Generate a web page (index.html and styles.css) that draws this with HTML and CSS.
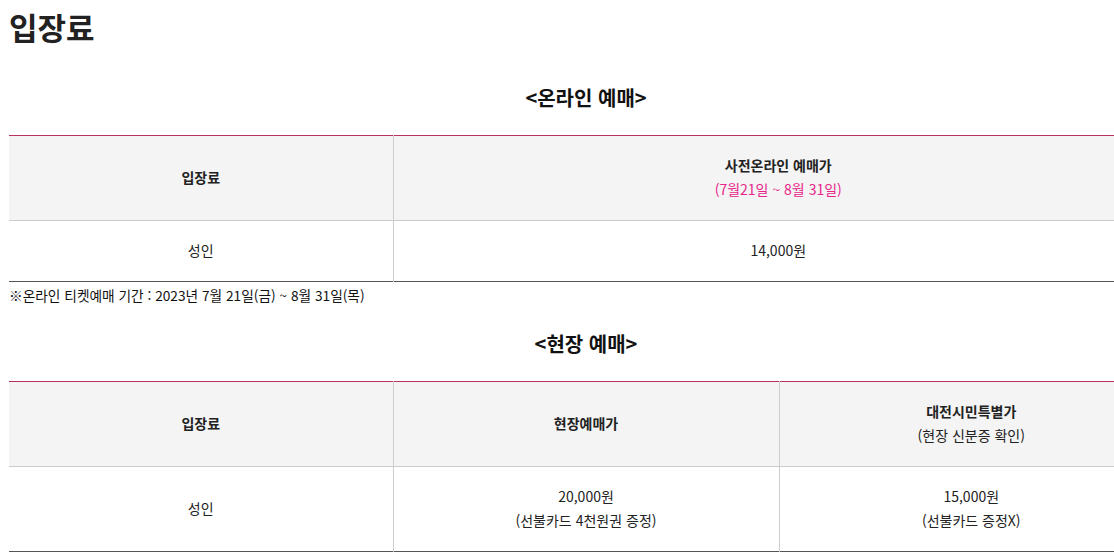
FILE: index.html
```html
<!DOCTYPE html>
<html lang="ko">
<head>
<meta charset="utf-8">
<title>입장료</title>
<link rel="stylesheet" href="styles.css">
</head>
<body>
<div class="wrap">
  <h2 class="page-title">입장료</h2>

  <h3 class="sec-title">&lt;온라인 예매&gt;</h3>
  <table class="fee">
    <colgroup><col class="c1"><col></colgroup>
    <thead>
      <tr>
        <th>입장료</th>
        <th>사전온라인 예매가<br><span class="pink">(7월21일 ~ 8월 31일)</span></th>
      </tr>
    </thead>
    <tbody>
      <tr>
        <td>성인</td>
        <td>14,000원</td>
      </tr>
    </tbody>
  </table>
  <p class="note">※온라인 티켓예매 기간 : 2023년 7월 21일(금) ~ 8월 31일(목)</p>

  <h3 class="sec-title">&lt;현장 예매&gt;</h3>
  <table class="fee">
    <colgroup><col class="c1"><col class="c2"><col></colgroup>
    <thead>
      <tr>
        <th>입장료</th>
        <th>현장예매가</th>
        <th>대전시민특별가<br><span class="sub">(현장 신분증 확인)</span></th>
      </tr>
    </thead>
    <tbody>
      <tr>
        <td>성인</td>
        <td>20,000원<br>(선불카드 4천원권 증정)</td>
        <td>15,000원<br>(선불카드 증정X)</td>
      </tr>
    </tbody>
  </table>
</div>
</body>
</html>
```
FILE: styles.css
```css
html, body {
  margin: 0;
  padding: 0;
  overflow: hidden;
  background: #fff;
}
body {
  font-family: "Noto Sans CJK KR", "Noto Sans", sans-serif;
  color: #222;
  font-size: 14px;
  line-height: 24px;
}
.wrap {
  width: 1154px;
  padding-left: 9px;
}
.page-title {
  margin: 7px 0 0 0;
  font-size: 31px;
  line-height: 40px;
  font-weight: 700;
  color: #222;
}
.sec-title {
  margin: 37px 0 23px 0;
  font-size: 20px;
  line-height: 28px;
  font-weight: 700;
  text-align: center;
  color: #111;
}
.note + .sec-title {
  margin-top: 23px;
}
.fee {
  width: 1154px;
  border-collapse: collapse;
  table-layout: fixed;
  border-top: 1px solid #b8325a;
  border-bottom: 1px solid #555;
}
.fee .c1 { width: 384px; }
.fee .c2 { width: 386px; }
.fee th, .fee td {
  padding: 17px 10px 19px;
  text-align: center;
  vertical-align: middle;
  border-left: 1px solid #ccc;
  font-size: 14px;
  line-height: 24px;
}
.fee th:first-child, .fee td:first-child {
  border-left: none;
}
.fee th {
  background: #f4f4f4;
  font-weight: 700;
  color: #222;
  border-bottom: 1px solid #ccc;
}
.fee td {
  font-weight: 400;
  color: #222;
}
.fee .pink {
  color: #e8268a;
  font-weight: 400;
}
.fee .sub {
  font-weight: 400;
}
.note {
  margin: 1px 0 0 0;
  font-size: 13.7px;
  line-height: 24px;
  color: #111;
}
```
